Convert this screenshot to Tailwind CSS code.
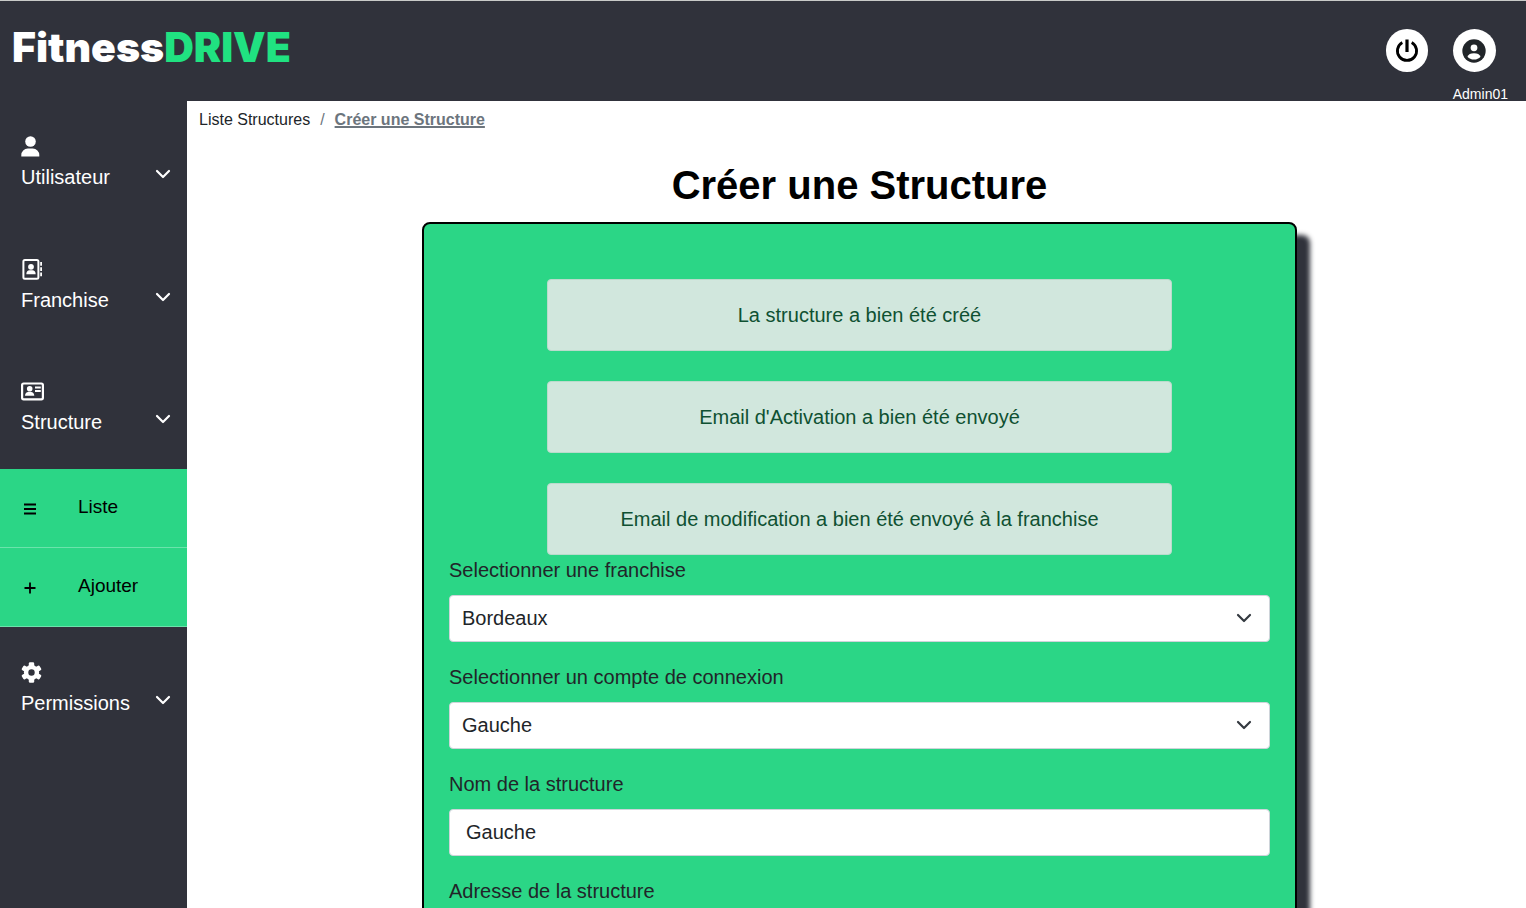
<!DOCTYPE html>
<html lang="fr">
<head>
<meta charset="utf-8">
<meta name="viewport" content="width=device-width, initial-scale=1">
<title>FitnessDRIVE - Créer une Structure</title>
<script src="https://cdn.jsdelivr.net/npm/@tailwindcss/browser@4"></script>
</head>
<body class="flex min-h-screen flex-col bg-white font-['Liberation_Sans',Arial,sans-serif] text-[#212529]">
<svg class="hidden" aria-hidden="true">
  <symbol id="chevron" viewBox="0 0 16 16"><path d="M2 5l6 6 6-6" fill="none" stroke="currentColor" stroke-width="2.200" stroke-linecap="round" stroke-linejoin="round"/></symbol>
</svg>
<header class="flex h-[101px] items-start justify-between border-t border-[#c8cac8] bg-[#30323b] pr-[18px] pl-3">
  <a href="#" class="mt-[21px] font-[Inter,sans-serif] text-[41px] leading-[50px] font-black text-white">Fitness<span class="text-[#20e281]">DRIVE</span></a>
  <div class="mt-7 flex gap-[25px]">
    <button type="button" aria-label="Déconnexion" class="flex h-[43px] w-[42px] items-center justify-center rounded-full bg-white text-black">
      <svg class="size-7" viewBox="0 0 28 28" fill="none" stroke="currentColor" stroke-width="2.800"><path d="M14 2.500v12.500" stroke-width="3.200"/><path d="M9.300 5.500A9.600 9.600 0 1 0 18.700 5.500"/></svg>
    </button>
    <div class="flex flex-col">
      <button type="button" aria-label="Profil" class="flex size-[43px] items-center justify-center rounded-full bg-white text-[#212529]">
        <svg class="size-7" viewBox="0 0 24 24"><circle cx="12" cy="12" r="10" fill="currentColor"/><circle cx="12" cy="9.300" r="2.900" fill="#fff"/><path d="M6.400 16.900c.8-1.900 2.600-2.900 5.600-2.900s4.800 1 5.600 2.900c-1.400 1.600-3.300 2.400-5.600 2.400s-4.200-.8-5.600-2.400z" fill="#fff"/></svg>
      </button>
      <span class="mt-3.5 text-sm leading-4 text-white">Admin01</span>
    </div>
  </div>
</header>
<div class="flex grow">
  <nav class="w-[187px] shrink-0 bg-[#30323b] text-xl text-white" aria-label="Menu principal">
    <button type="button" class="flex h-[123px] w-full items-end justify-between pr-4 pb-8 pl-[21px] text-left">
      <span class="flex flex-col gap-[5px]">
        <svg class="h-[21px] w-[19px]" viewBox="0 0 19 21" fill="currentColor"><circle cx="9.500" cy="5.500" r="5.300"/><path d="M0.300 20.500v-1.500a6.500 6.500 0 0 1 6.500-6.500h5a6.500 6.500 0 0 1 6.500 6.500v1.500z"/></svg>
        <span class="leading-[30px]">Utilisateur</span>
      </span>
      <svg class="mb-2.5 size-4"><use href="#chevron"/></svg>
    </button>
    <button type="button" class="flex h-[123px] w-full items-end justify-between pr-4 pb-8 pl-[21px] text-left">
      <span class="flex flex-col gap-[5px]">
        <svg class="h-[21px] w-[22px]" viewBox="0 0 22 21" fill="currentColor"><rect x="2.400" y="1" width="15" height="18.800" rx="1.500" fill="none" stroke="currentColor" stroke-width="2"/><circle cx="10" cy="7.800" r="2.900"/><path d="M5.300 15.200c0-2.500 1.500-3.900 3.200-3.900h3c1.700 0 3.200 1.400 3.200 3.900z"/><path d="M19.200 3h1.800v3.800h-1.800zM19.200 8.200h1.800V12h-1.800zM19.200 13.400h1.800v3.800h-1.800z"/></svg>
        <span class="leading-[30px]">Franchise</span>
      </span>
      <svg class="mb-2.5 size-4"><use href="#chevron"/></svg>
    </button>
    <button type="button" aria-expanded="true" class="flex h-[122px] w-full items-end justify-between pr-4 pb-8 pl-[21px] text-left">
      <span class="flex flex-col gap-[5px]">
        <svg class="h-[21px] w-[23px]" viewBox="0 0 23 21" fill="currentColor"><rect x="1.100" y="2.500" width="20.800" height="15.800" rx="1.500" fill="none" stroke="currentColor" stroke-width="2.200"/><circle cx="8.700" cy="7.700" r="2.800"/><path d="M4 14.800c0-2.500 1.500-3.800 3.200-3.800h2.900c1.700 0 3.200 1.300 3.200 3.800zM14 5.600h5.800v2h-5.800zM14 9h5.800v2h-5.800z"/></svg>
        <span class="leading-[30px]">Structure</span>
      </span>
      <svg class="mb-2.5 size-4"><use href="#chevron"/></svg>
    </button>
    <ul class="bg-[#2bd686] text-[19px] text-black">
      <li><a href="#" class="flex h-[79px] items-center gap-[42px] border-b border-[#6be3ab] pb-0.5 pl-6"><svg class="mt-1 size-3" viewBox="0 0 12 12" stroke="currentColor" stroke-width="1.900"><path d="M0 1.500h12M0 6h12M0 10.500h12"/></svg>Liste</a></li>
      <li><a href="#" class="flex h-[79px] items-center gap-[42px] border-b border-[#6be3ab] pb-0.5 pl-6"><svg class="mt-1 size-3" viewBox="0 0 12 12" stroke="currentColor" stroke-width="1.800"><path d="M.5 6h11M6 .5v11"/></svg>Ajouter</a></li>
    </ul>
    <button type="button" class="flex h-[123px] w-full items-end justify-between pr-4 pb-8 pl-[21px] text-left">
      <span class="flex flex-col gap-[5px]">
        <svg class="size-[21px]" viewBox="0 0 21 21" fill="currentColor"><circle cx="10.500" cy="10.500" r="7.600"/><rect x="7.800" y=".2" width="5.400" height="20.600" rx="1.300"/><rect x="7.800" y=".2" width="5.400" height="20.600" rx="1.300" transform="rotate(60 10.500 10.500)"/><rect x="7.800" y=".2" width="5.400" height="20.600" rx="1.300" transform="rotate(120 10.500 10.500)"/><circle cx="10.500" cy="10.500" r="3.200" fill="#30323b"/></svg>
        <span class="leading-[30px]">Permissions</span>
      </span>
      <svg class="mb-2.5 size-4"><use href="#chevron"/></svg>
    </button>
  </nav>
  <main class="min-w-0 grow px-3 pb-10">
    <nav aria-label="Fil d'Ariane" class="mt-[7px] flex gap-2.5 leading-6">
      <a href="#">Liste Structures</a>
      <span class="text-[#6c757d]">/</span>
      <a href="#" aria-current="page" class="font-bold text-[#6c757d] underline decoration-2">Créer une Structure</a>
    </nav>
    <div class="pl-1.5">
      <h1 class="mt-[29px] text-center text-[40px] leading-[48px] font-bold text-black">Créer une Structure</h1>
      <form class="mx-auto mt-[13px] max-w-[875px] rounded-lg border-2 border-black bg-[#2bd686] px-[25px] pt-[55px] pb-8 text-xl leading-[30px] shadow-[13px_13px_5px_#30323b]">
        <div class="mx-auto flex max-w-[625px] flex-col gap-[30px] text-center text-[#0f5132]">
          <p role="status" class="rounded-sm border border-[#badbcc] bg-[#d1e7dd] p-5">La structure a bien été créé</p>
          <p role="status" class="rounded-sm border border-[#badbcc] bg-[#d1e7dd] p-5">Email d'Activation a bien été envoyé</p>
          <p role="status" class="rounded-sm border border-[#badbcc] bg-[#d1e7dd] p-5">Email de modification a bien été envoyé à la franchise</p>
        </div>
        <label for="franchise" class="mb-2.5 block">Selectionner une franchise</label>
        <div class="relative mb-5">
          <select id="franchise" class="block h-[47px] w-full appearance-none rounded-sm border border-[#ced4da] bg-white px-3 pb-0.5"><option>Bordeaux</option></select>
          <svg class="pointer-events-none absolute top-[15px] right-[18px] size-4 text-[#343a40]"><use href="#chevron"/></svg>
        </div>
        <label for="compte" class="mb-2.5 block">Selectionner un compte de connexion</label>
        <div class="relative mb-5">
          <select id="compte" class="block h-[47px] w-full appearance-none rounded-sm border border-[#ced4da] bg-white px-3 pb-0.5"><option>Gauche</option></select>
          <svg class="pointer-events-none absolute top-[15px] right-[18px] size-4 text-[#343a40]"><use href="#chevron"/></svg>
        </div>
        <label for="nom" class="mb-2.5 block">Nom de la structure</label>
        <input id="nom" type="text" value="Gauche" class="mb-5 block h-[47px] w-full rounded-sm border border-[#ced4da] bg-white px-4">
        <label for="adresse" class="mb-2.5 block">Adresse de la structure</label>
        <input id="adresse" type="text" class="block h-[47px] w-full rounded-sm border border-[#ced4da] bg-white px-4">
      </form>
    </div>
  </main>
</div>
</body>
</html>
